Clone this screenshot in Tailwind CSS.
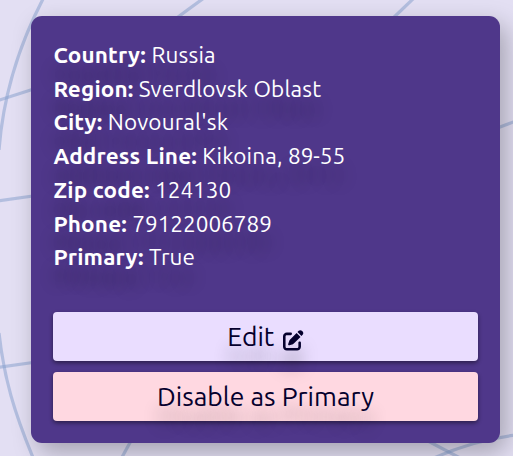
<!DOCTYPE html>
<html lang="en">
<head>
<meta charset="utf-8">
<title>Address</title>
<script src="https://cdn.jsdelivr.net/npm/@tailwindcss/browser@4"></script>
</head>
<body class="relative h-[456px] w-[513px] overflow-hidden bg-[#e3dff3] font-['Ubuntu','Noto_Sans',sans-serif]">
<svg class="absolute inset-0 h-[456px] w-[513px]" viewBox="0 0 513 456" fill="none" stroke="#87a0cd" stroke-opacity=".52" stroke-width="3.2">
<path d="M43 -1Q5 72 -1 150"/>
<path d="M-2 100.500L40 87"/>
<path d="M-2 201L40 195"/>
<path d="M-2 367.500L40 361.500"/>
<path d="M-1 333C4 378 14 412 34 460"/>
<path d="M204 -2Q190 8 174 20"/>
<path d="M414 -2L390 21"/>
<path d="M496 128.500L516 121"/>
<path d="M132 439L121 459"/>
<path d="M428 441L462 459"/>
<path d="M434 458Q474 440 516 435"/>
</svg>
<main class="relative pt-4 pl-[31px]">
<section class="h-[427px] w-[469px] rounded-[11px] bg-[#4f378a] px-[22px] pt-[21.9px] shadow-[6px_9px_24px_rgba(0,0,0,0.28)]">
<div class="pl-[0.4px] text-[22.5px] leading-[33.75px] tracking-[0.16px] whitespace-nowrap text-white [text-shadow:0_19px_16px_rgba(0,0,0,0.26)]">
<p><b>Country:</b> Russia</p>
<p><b>Region:</b> Sverdlovsk Oblast</p>
<p><b>City:</b> Novoural'sk</p>
<p><b>Address Line:</b> Kikoina, <span class="tracking-normal">89-55</span></p>
<p><b>Zip code:</b> <span class="tracking-normal">124130</span></p>
<p><b>Phone:</b> <span class="tracking-normal">79122006789</span></p>
<p><b>Primary:</b> True</p>
</div>
<div class="mt-[37.85px] flex flex-col gap-[11px] text-[26.5px] text-[#05002d] [text-shadow:0_19px_16px_rgba(0,0,0,0.3)]">
<button class="flex h-[49px] items-center justify-center gap-[9px] rounded-[4px] bg-[#eaddff] shadow-[0_2px_4px_rgba(0,0,0,0.45)] [text-shadow:inherit]">
<span>Edit</span>
<svg class="mt-[7px] size-[20.5px] overflow-visible drop-shadow-[0_18px_8px_rgba(0,0,0,0.3)]" viewBox="0 0 512 512" fill="currentColor"><path d="M471.600 21.700c-21.900-21.900-57.300-21.900-79.200 0L362.300 51.700l97.900 97.900 30.100-30.100c21.900-21.900 21.900-57.300 0-79.200L471.600 21.700zM172.400 241.700c-6.100 6.100-10.800 13.600-13.500 21.900l-29.600 88.800c-2.900 8.600-.6 18.100 5.800 24.600s15.900 8.700 24.600 5.800l88.800-29.600c8.200-2.700 15.700-7.400 21.900-13.500L437.700 172.300 339.700 74.300 172.400 241.700zM96 64C43 64 0 107 0 160V416c0 53 43 96 96 96H352c53 0 96-43 96-96V320c0-17.700-14.300-32-32-32s-32 14.300-32 32v96c0 17.700-14.300 32-32 32H96c-17.700 0-32-14.300-32-32V160c0-17.700 14.300-32 32-32h96c17.700 0 32-14.300 32-32s-14.300-32-32-32H96z"/></svg>
</button>
<button class="flex h-[49px] items-center justify-center rounded-[4px] bg-[#ffd8e1] shadow-[0_2px_4px_rgba(0,0,0,0.45)] [text-shadow:inherit]">Disable as Primary</button>
</div>
</section>
</main>
</body>
</html>
